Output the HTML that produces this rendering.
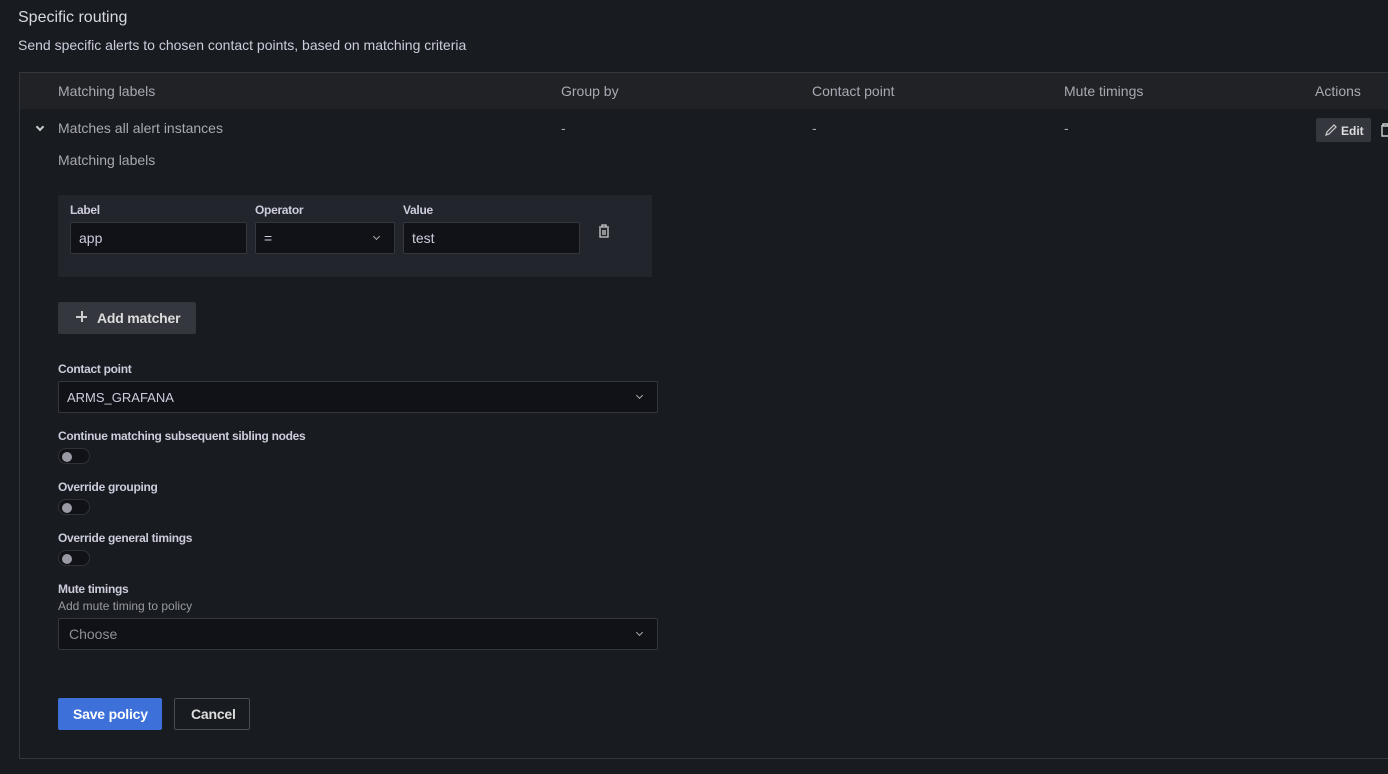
<!DOCTYPE html>
<html><head><style>
*{box-sizing:border-box;margin:0;padding:0}
body{width:1388px;height:774px;background:#181b1f;font-family:"Liberation Sans",sans-serif;color:#ccccdc;position:relative;overflow:hidden;font-size:14px}
.a{position:absolute}
.lbl{font-size:12px;font-weight:bold;color:#ccccdc;letter-spacing:-0.3px}
.inp{background:#111217;border:1px solid #34373d;border-radius:2px;color:#ccccdc;font-size:14px;padding-left:8px;display:flex;align-items:center}
.tg{width:32px;height:16px;border-radius:8px;background:#111217;border:1px solid #2f3237}
.tg::after{content:"";position:absolute;left:3px;top:3px;width:10px;height:10px;border-radius:50%;background:#9a9aa4}
.chev{position:absolute;width:6px;height:6px;border-right:1.3px solid #aaa;border-bottom:1.3px solid #aaa;transform:rotate(45deg)}
</style></head><body>
<div class="a" style="left:18px;top:9px;font-size:16px;color:#d8d9e3">Specific routing</div>
<div class="a" style="left:18px;top:37px;font-size:14px;color:#ccccdc">Send specific alerts to chosen contact points, based on matching criteria</div>
<div class="a" style="left:19px;top:72px;width:1400px;height:687px;border:1px solid #34373d;background:#181b1f"></div>
<div class="a" style="left:20px;top:73px;width:1368px;height:36px;background:#202226"></div>
<div class="a" style="left:58px;top:83px;color:#a8a9b3">Matching labels</div>
<div class="a" style="left:561px;top:83px;color:#a8a9b3">Group by</div>
<div class="a" style="left:812px;top:83px;color:#a8a9b3">Contact point</div>
<div class="a" style="left:1064px;top:83px;color:#a8a9b3">Mute timings</div>
<div class="a" style="left:1315px;top:83px;color:#a8a9b3">Actions</div>
<div class="chev" style="left:37px;top:124px;border-color:#ccc;border-width:2px"></div>
<div class="a" style="left:58px;top:120px;color:#a8a9b3">Matches all alert instances</div>
<div class="a" style="left:561px;top:120px;color:#a8a9b3">-</div>
<div class="a" style="left:812px;top:120px;color:#a8a9b3">-</div>
<div class="a" style="left:1064px;top:120px;color:#a8a9b3">-</div>
<div class="a" style="left:1316px;top:118px;width:55px;height:24px;background:#34373d;border-radius:2px;font-size:12px;font-weight:bold;color:#ddd;padding:6px 0 0 25px">Edit</div>
<svg class="a" style="left:1324px;top:123px" width="14" height="14" viewBox="0 0 14 14"><path d="M2 12l1-3 7-7 2 2-7 7z" fill="none" stroke="#ccc" stroke-width="1.2"/></svg>
<svg class="a" style="left:1380px;top:122px" width="10" height="16" viewBox="0 0 10 16"><path d="M1 4h10M3 4V2h5v2M2 5v9h8V5" fill="none" stroke="#ccc" stroke-width="1.4"/></svg>
<div class="a" style="left:58px;top:152px;color:#a8a9b3">Matching labels</div>
<div class="a" style="left:58px;top:195px;width:594px;height:82px;background:#22252b"></div>
<div class="a lbl" style="left:70px;top:203px">Label</div>
<div class="a lbl" style="left:255px;top:203px">Operator</div>
<div class="a lbl" style="left:403px;top:203px">Value</div>
<div class="a inp" style="left:70px;top:222px;width:177px;height:32px">app</div>
<div class="a inp" style="left:255px;top:222px;width:140px;height:32px">=</div>
<div class="chev" style="left:374px;top:234px;width:5px;height:5px"></div>
<div class="a inp" style="left:403px;top:222px;width:177px;height:32px">test</div>
<svg class="a" style="left:598px;top:224px" width="12" height="14" viewBox="0 0 12 14"><path d="M1 3h10M4 3V1h4v2M2 4v9h8V4M5 6v5M7 6v5" fill="none" stroke="#ccc" stroke-width="1.3"/></svg>
<div class="a" style="left:58px;top:302px;width:138px;height:32px;background:#34373d;border-radius:2px;font-weight:bold;color:#ddd;padding:8px 0 0 39px;letter-spacing:-0.2px">Add matcher</div>
<div class="a" style="left:76px;top:316px;width:11px;height:1.5px;background:#ccc"></div>
<div class="a" style="left:81px;top:311px;width:1.5px;height:11px;background:#ccc"></div>
<div class="a lbl" style="left:58px;top:362px">Contact point</div>
<div class="a inp" style="left:58px;top:381px;width:600px;height:32px;font-size:13px">ARMS_GRAFANA</div>
<div class="chev" style="left:637px;top:393px;width:5px;height:5px"></div>
<div class="a lbl" style="left:58px;top:429px">Continue matching subsequent sibling nodes</div>
<div class="a tg" style="left:58px;top:448px"></div>
<div class="a lbl" style="left:58px;top:480px">Override grouping</div>
<div class="a tg" style="left:58px;top:499px"></div>
<div class="a lbl" style="left:58px;top:531px">Override general timings</div>
<div class="a tg" style="left:58px;top:550px"></div>
<div class="a lbl" style="left:58px;top:582px">Mute timings</div>
<div class="a" style="left:58px;top:599px;font-size:12px;color:#9a9aa4">Add mute timing to policy</div>
<div class="a inp" style="left:58px;top:618px;width:600px;height:32px;color:#8e8e96;padding-left:10px">Choose</div>
<div class="chev" style="left:637px;top:630px;width:5px;height:5px"></div>
<div class="a" style="left:58px;top:698px;width:104px;height:32px;background:#3d71d9;border-radius:2px;font-weight:bold;color:#fff;padding:8px 0 0 15px;letter-spacing:-0.2px">Save policy</div>
<div class="a" style="left:174px;top:698px;width:76px;height:32px;border:1px solid #4a4d53;border-radius:2px;font-weight:bold;color:#ddd;padding:7px 0 0 16px;letter-spacing:-0.2px">Cancel</div>
</body></html>
